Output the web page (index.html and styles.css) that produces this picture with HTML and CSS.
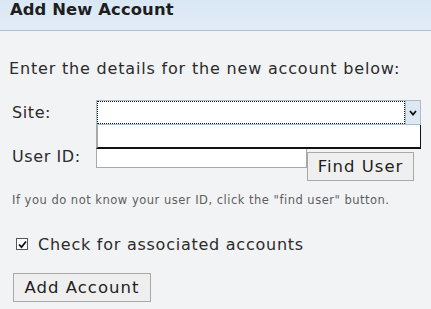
FILE: index.html
```html
<!DOCTYPE html>
<html>
<head>
<meta charset="utf-8">
<link rel="stylesheet" href="styles.css">
</head>
<body>
<div class="header"><h1 class="title">Add New Account</h1></div>
<div class="content">
  <p class="intro">Enter the details for the new account below:</p>
  <div class="row row-site">
    <span class="label">Site:</span>
    <div class="select">
      <div class="select-field"></div>
      <div class="select-arrow">
        <svg width="8" height="6" viewBox="0 0 8 6"><path d="M1 1 L4 4.5 L7 1" fill="none" stroke="#111" stroke-width="1.8"/></svg>
      </div>
      <div class="select-list"></div>
    </div>
  </div>
  <div class="row row-user">
    <span class="label label-user">User ID:</span>
    <div class="input"></div>
    <button class="btn btn-find">Find User</button>
  </div>
  <p class="help">If you do not know your user ID, click the "find user" button.</p>
  <div class="check-row">
    <span class="checkbox"><svg width="9" height="9" viewBox="0 0 9 9"><path d="M1 4.5 L3.5 7.2 L8 1.5" fill="none" stroke="#111" stroke-width="1.8"/></svg></span>
    <span class="check-label">Check for associated accounts</span>
  </div>
  <button class="btn btn-add">Add Account</button>
</div>
</body>
</html>
```
FILE: styles.css
```css
html, body {
  margin: 0;
  padding: 0;
}
body {
  background: #f2f3f5;
  font-family: "DejaVu Sans", Verdana, sans-serif;
  color: #333;
  width: 431px;
  height: 309px;
  overflow: hidden;
}
.header {
  height: 30px;
  border-bottom: 1px solid #adbfcc;
  background: linear-gradient(#d9e7f4, #e2ecf7);
  padding-left: 10px;
  box-sizing: content-box;
}
.title {
  margin: 0;
  font-size: 16.4px;
  font-weight: bold;
  color: #1e1e1e;
  line-height: 20px;
  padding-top: 0;
  letter-spacing: 0.1px;
}
.content {
  padding-left: 9px;
}
.intro {
  margin: 28px 0 0 0;
  font-size: 16px;
  line-height: 20px;
  letter-spacing: 0.82px;
  color: #2b2b2b;
}
.row {
  display: flex;
  padding-left: 3px;
}
.row-site {
  margin-top: 21px;
  align-items: center;
  height: 25px;
}
.label {
  width: 84px;
  flex: none;
  font-size: 16px;
  letter-spacing: 0.6px;
  color: #2b2b2b;
}
.select {
  position: relative;
  display: flex;
  width: 325px;
  height: 25px;
  box-sizing: border-box;
  border: 1px solid #a9bccb;
  background: #fff;
}
.select-field {
  flex: 1;
  margin: 0;
  border: 1px dotted #111;
  background: #fff;
}
.select-arrow {
  width: 14px;
  flex: none;
  background: #dde8f3;
  border-left: 1px solid #a9bccb;
  display: flex;
  align-items: center;
  justify-content: center;
}
.select-list {
  position: absolute;
  left: -1px;
  top: 24px;
  width: 325px;
  height: 24px;
  box-sizing: border-box;
  background: #fff;
  border-left: 2px solid #a8a8a8;
  border-right: 1px solid #111;
  border-bottom: 2px solid #111;
}
.row-user {
  margin-top: 23px;
  align-items: flex-start;
}
.label-user {
  padding-top: 0;
  line-height: 18px;
}
.input {
  width: 211px;
  height: 20px;
  box-sizing: border-box;
  background: #fff;
  border: 1px solid #a8a8a8;
  flex: none;
}
.btn {
  font-family: "DejaVu Sans", Verdana, sans-serif;
  font-size: 16.5px;
  color: #1e1e1e;
  background: #efefef;
  border: 1px solid #a9a9a9;
  border-radius: 0;
  padding: 0;
  height: 29px;
  letter-spacing: 1px;
}
.btn-find {
  width: 107px;
  margin-top: 4px;
  flex: none;
}
.help {
  margin: 12px 0 0 3px;
  font-size: 11.5px;
  line-height: 14px;
  color: #5e5e5e;
  letter-spacing: 0.5px;
}
.check-row {
  display: flex;
  align-items: center;
  margin-top: 27px;
  padding-left: 7px;
  height: 20px;
}
.checkbox {
  width: 12px;
  height: 12px;
  box-sizing: border-box;
  border: 1px solid #555;
  background: #fff;
  display: flex;
  align-items: center;
  justify-content: center;
  flex: none;
}
.check-label {
  margin-left: 10px;
  font-size: 16px;
  letter-spacing: 0.75px;
  color: #2b2b2b;
}
.btn-add {
  display: block;
  margin: 19px 0 0 4px;
  width: 138px;
}
```
